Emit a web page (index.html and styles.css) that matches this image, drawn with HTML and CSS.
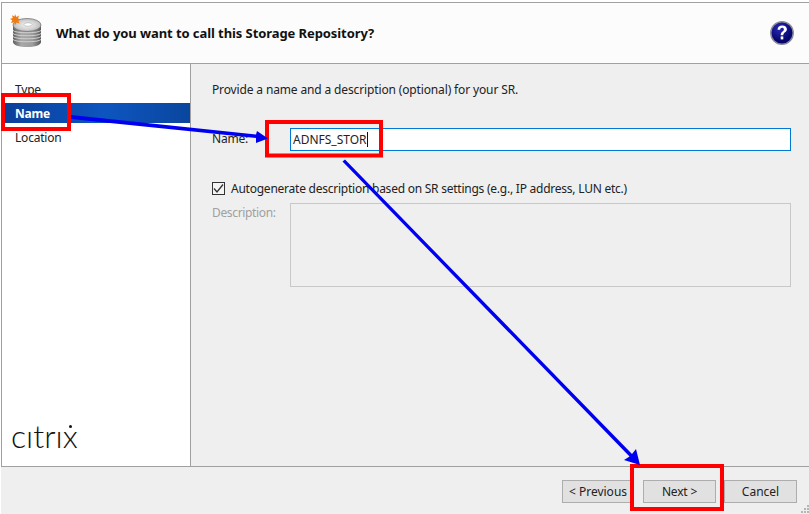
FILE: index.html
```html
<!DOCTYPE html>
<html lang="en">
<head>
<meta charset="utf-8">
<title>New Storage Repository</title>
<link rel="stylesheet" href="styles.css">
</head>
<body>
<div class="window">
  <header class="header">
    <svg class="sr-icon" width="34" height="36" viewBox="0 0 34 36">
      <defs>
        <linearGradient id="stack" x1="0" x2="1" y1="0" y2="0">
          <stop offset="0" stop-color="#5e5e5e"/><stop offset=".3" stop-color="#a8a8a8"/><stop offset=".7" stop-color="#9c9c9c"/><stop offset="1" stop-color="#585858"/>
        </linearGradient>
        <radialGradient id="disc" cx=".5" cy=".5" r=".6">
          <stop offset="0" stop-color="#f4f4f4"/><stop offset=".6" stop-color="#cfcfcf"/><stop offset="1" stop-color="#a9a9a9"/>
        </radialGradient>
      </defs>
      <path d="M3 12v17c0 3 6 5 14 5s14-2 14-5V12z" fill="url(#stack)"/>
      <path d="M3 17.500c2 3 26 3 28 0M3 20.500c2 3 26 3 28 0M3 23.500c2 3 26 3 28 0M3 26.500c2 3 26 3 28 0" fill="none" stroke="#cfcfcf" stroke-width="1"/>
      <ellipse cx="17" cy="12" rx="14" ry="6.500" fill="url(#disc)" stroke="#777" stroke-width=".8"/>
      <ellipse cx="18" cy="11.500" rx="4" ry="1.800" fill="#fff" stroke="#aaa" stroke-width=".6"/>
      <path d="M5 1l1.300 3 2.700-1.500-1 3 3 .8-2.800 1.500 1.300 2.700-3-1-1.200 2.500-1.200-2.800L1 10l1.300-2.700L0 6l2.800-1L2 2.300l2.500 1.200z" fill="#f07a10"/>
    </svg>
    <h1 class="title">What do you want to call this Storage Repository?</h1>
    <svg class="help-icon" width="24" height="24" viewBox="0 0 24 24">
      <defs>
        <radialGradient id="help" cx=".4" cy=".3" r=".8">
          <stop offset="0" stop-color="#2a2ab4"/><stop offset=".7" stop-color="#05056f"/><stop offset="1" stop-color="#0b0b50"/>
        </radialGradient>
      </defs>
      <circle cx="12" cy="12" r="11.200" fill="url(#help)" stroke="#8a8a9a" stroke-width="1.500"/>
      <path d="M7.500 8.800C7.700 5.800 9.700 4.500 12.200 4.500c2.900 0 4.700 1.500 4.700 3.800 0 3.100-3.600 3-3.600 5.900h-2.600c0-3.700 3.200-3.900 3.200-5.800 0-1-.7-1.600-1.800-1.600-1.200 0-1.900.7-2 2z" fill="#fff"/>
      <rect x="10.700" y="15.400" width="2.600" height="3" fill="#fff"/>
    </svg>
  </header>
  <div class="main">
    <aside class="sidebar">
      <ul class="steps">
        <li class="step">Type</li>
        <li class="step step-active">Name</li>
        <li class="step">Location</li>
      </ul>
      <div class="logo">cıtrıx</div>
    </aside>
    <section class="content">
      <p class="intro">Provide a name and a description (optional) for your SR.</p>
      <div class="field field-name">
        <label class="field-label">Name:</label>
        <div class="text-input"><span>ADNFS_STOR</span><i class="caret"></i></div>
      </div>
      <div class="check-row">
        <span class="checkbox">
          <svg width="13" height="13" viewBox="0 0 13 13"><path d="M2 6.500l3 3.500 6-7.500" fill="none" stroke="#333" stroke-width="1.300"/></svg>
        </span>
        <span class="check-label">Autogenerate description based on SR settings (e.g., IP address, LUN etc.)</span>
      </div>
      <div class="field field-desc">
        <label class="field-label disabled">Description:</label>
        <div class="text-area"></div>
      </div>
    </section>
  </div>
  <footer class="footer">
    <button class="btn btn-prev">&lt; Previous</button>
    <button class="btn btn-next">Next &gt;</button>
    <button class="btn">Cancel</button>
    <svg class="grip" width="8" height="8" viewBox="0 0 8 8">
      <g fill="#b5b5b5">
        <rect x="6" y="0" width="2" height="2"/>
        <rect x="3" y="3" width="2" height="2"/><rect x="6" y="3" width="2" height="2"/>
        <rect x="0" y="6" width="2" height="2"/><rect x="3" y="6" width="2" height="2"/><rect x="6" y="6" width="2" height="2"/>
      </g>
    </svg>
  </footer>
</div>
<svg class="annotations" width="809" height="514" viewBox="0 0 809 514">
  <g fill="none" stroke="#f00" stroke-width="4">
    <rect x="3" y="95" width="66" height="34"/>
    <rect x="267" y="122" width="114" height="33.500"/>
    <rect x="632" y="466" width="90" height="43"/>
  </g>
  <g fill="#0000f0" stroke="none">
    <polygon points="71,115 256,134.500 257,131 268,138.500 256,143 256,138 71,119"/>
    <polygon points="342.500,161.500 345,159.500 632,454 636,449 640,465 624,460 629.500,456.500"/>
  </g>
</svg>
</body>
</html>
```
FILE: styles.css
```css
* { box-sizing: border-box; }
html, body { margin: 0; padding: 0; background: #fff; }
body {
  width: 809px;
  height: 514px;
  overflow: hidden;
  position: relative;
  font-family: "Noto Sans", "Liberation Sans", sans-serif;
  font-size: 12px;
  color: #222;
}
.window {
  margin: 2px 0 0 1px;
  height: 512px;
  display: flex;
  flex-direction: column;
  border-top: 1px solid #a0a0a0;
}
.header {
  height: 61px;
  flex: none;
  display: flex;
  align-items: center;
  background: #fcfcfc;
  border-left: 1px solid #a0a0a0;
  border-bottom: 1px solid #a0a0a0;
  padding: 0 15px 0 8px;
}
.sr-icon { margin: 0 12px 0 0; flex: none; position: relative; top: -2px; }
.title {
  flex: 1;
  margin: 0;
  font-size: 13px;
  font-weight: 700;
  color: #111;
  letter-spacing: -0.08px;
}
.help-icon { flex: none; }
.main {
  flex: 1;
  display: flex;
  min-height: 0;
  border-left: 1px solid #a0a0a0;
  border-bottom: 1px solid #a0a0a0;
}
.sidebar {
  width: 189px;
  flex: none;
  background: #fff;
  border-right: 1px solid #a0a0a0;
  display: flex;
  flex-direction: column;
  justify-content: space-between;
}
.steps { list-style: none; margin: 0; padding: 15px 0 0; }
.step {
  height: 20px;
  line-height: 22px;
  margin-bottom: 4px;
  padding-left: 13px;
  color: #222;
  letter-spacing: -0.2px;
}
.step-active {
  color: #fff;
  font-weight: 700;
  letter-spacing: -0.2px;
  background: linear-gradient(90deg, #0a3f9a 0%, #0d55bf 55%, #0a469e 100%);
}
.logo {
  position: relative;
  font-family: "Lato", sans-serif;
  font-weight: 300;
  font-size: 32px;
  line-height: 30px;
  letter-spacing: 0;
  color: #111;
  padding: 0 0 15px 9px;
}
.logo::after {
  content: "";
  position: absolute;
  left: 67px;
  top: 4px;
  width: 3px;
  height: 3px;
  border-radius: 50%;
  background: #111;
}
.content { flex: 1; background: #efefef; padding: 15px 18px 0 21px; }
.intro { margin: 0; height: 20px; line-height: 22px; letter-spacing: -0.14px; }
.field { display: flex; }
.field-name { margin-top: 29px; align-items: center; }
.field-label { width: 78px; flex: none; letter-spacing: -0.2px; }
.field-name .field-label { padding-bottom: 3px; }
.field-label.disabled { color: #a0a0a0; letter-spacing: -0.35px; }
.text-input {
  flex: 1;
  height: 23px;
  background: #fff;
  border: 1px solid #0078d7;
  padding-left: 2px;
  line-height: 20px;
  display: flex;
  align-items: center;
}
.caret { width: 1px; height: 15px; background: #111; }
.check-row { display: flex; align-items: center; margin-top: 29px; height: 17px; gap: 6px; }
.check-label { letter-spacing: -0.24px; }
.checkbox {
  width: 13px;
  height: 13px;
  flex: none;
  border: 1px solid #333;
  background: #f4f4f4;
  display: flex;
  align-items: center;
  justify-content: center;
}
.checkbox svg { flex: none; }
.field-desc { margin-top: 6px; }
.field-desc .field-label { line-height: 20px; }
.text-area { flex: 1; height: 84px; border: 1px solid #c8c8c8; background: #efefef; }
.footer {
  height: 47px;
  flex: none;
  background: #efefef;
  display: flex;
  justify-content: flex-end;
  align-items: flex-start;
  gap: 8px;
  padding: 13px 12px 0 0;
  position: relative;
}
.btn {
  width: 73px;
  height: 23px;
  padding: 0;
  background: #e1e1e1;
  border: 1px solid #adadad;
  font: inherit;
  color: #222;
}
.btn-prev { width: 72px; }
.btn-next { margin-left: 1px; letter-spacing: -0.2px; }
.grip { position: absolute; right: 0; bottom: 1px; }
.annotations { position: absolute; left: 0; top: 0; pointer-events: none; }
```
